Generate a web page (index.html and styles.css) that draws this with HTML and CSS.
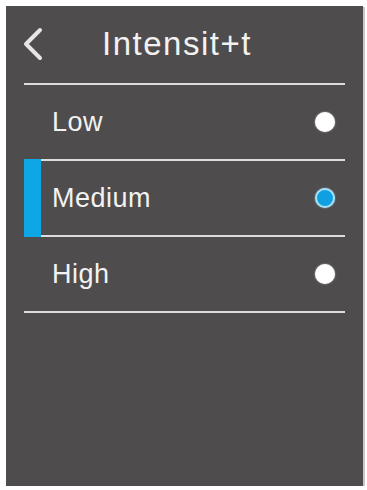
FILE: index.html
```html
<!DOCTYPE html>
<html>
<head>
<meta charset="utf-8">
<link rel="stylesheet" href="styles.css">
</head>
<body>
<div class="panel">
  <div class="header">
    <svg class="back" width="22" height="34" viewBox="0 0 22 34">
      <path d="M18 3 L4 17 L18 31" fill="none" stroke="#e6e6e6" stroke-width="4" stroke-linecap="round" stroke-linejoin="round"/>
    </svg>
    <div class="title">Intensit+t</div>
  </div>
  <div class="list">
    <div class="row">
      <span class="marker"></span>
      <span class="label">Low</span>
      <span class="dot"></span>
    </div>
    <div class="row selected">
      <span class="marker"></span>
      <span class="label">Medium</span>
      <span class="dot"></span>
    </div>
    <div class="row">
      <span class="marker"></span>
      <span class="label">High</span>
      <span class="dot"></span>
    </div>
  </div>
</div>
</body>
</html>
```
FILE: styles.css
```css
html, body {
  margin: 0;
  padding: 0;
  background: #ffffff;
}
body {
  font-family: "Liberation Sans", Arial, sans-serif;
}
.panel {
  margin: 6px 0 0 6px;
  width: 357px;
  height: 480px;
  box-sizing: border-box;
  background: #4e4c4d;
  padding: 0 18px;
  box-shadow: 2px 1px 0 #c8c8c8;
}
.header {
  height: 77px;
  display: flex;
  align-items: center;
}
.back {
  margin-left: -2px;
  margin-top: -2px;
}
.title {
  margin-left: 58px;
  color: #f2f2f2;
  font-size: 33px;
  letter-spacing: 1.5px;
  margin-top: -1px;
}
.list {
  border-top: 2px solid #dcdcdc;
}
.row {
  height: 74px;
  display: flex;
  align-items: stretch;
  border-bottom: 2px solid #dcdcdc;
}
.marker {
  width: 17px;
  flex: none;
}
.selected .marker {
  background: #0ea6e4;
  margin-top: -2px;
  margin-bottom: -2px;
}
.label {
  margin-left: 11px;
  align-self: center;
  color: #f2f2f2;
  font-size: 27px;
  letter-spacing: 0.5px;
  flex: 1;
}
.dot {
  align-self: center;
  width: 20px;
  height: 20px;
  border-radius: 50%;
  background: #ffffff;
  margin-right: 10px;
  box-shadow: 0 0 2px rgba(255,255,255,0.6);
}
.selected .dot {
  box-sizing: border-box;
  background: #0fa0e2;
  border: 2px solid #a8e2f8;
  box-shadow: 0 0 2px rgba(168,226,248,0.7);
}
```
